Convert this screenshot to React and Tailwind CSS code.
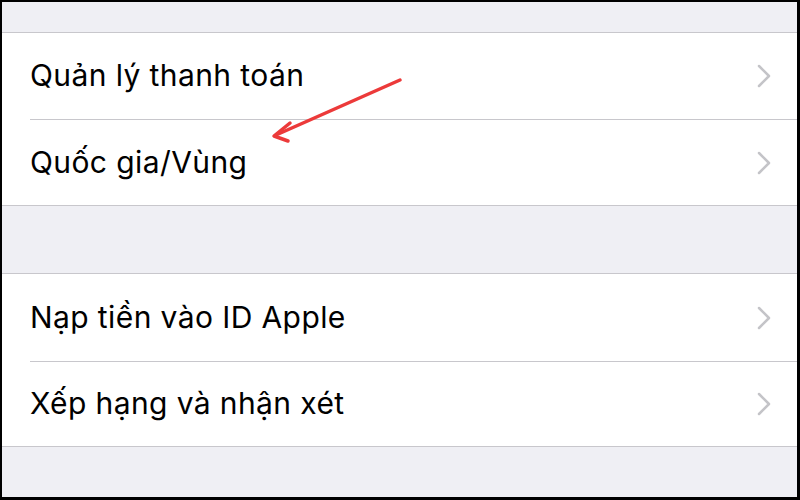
const rowsA = ['Quản lý thanh toán', 'Quốc gia/Vùng']
const rowsB = ['Nạp tiền vào ID Apple', 'Xếp hạng và nhận xét']

function Chevron() {
  return (
    <svg width="14" height="24" viewBox="0 0 14 24" fill="none">
      <polyline points="2,2 12,12 2,22" stroke="#c4c4c8" strokeWidth="2.5" strokeLinecap="round" strokeLinejoin="round" />
    </svg>
  )
}

function Row({ label, last, h }) {
  return (
    <div className={`flex bg-white ${h}`}>
      <div className={`flex flex-1 items-center justify-between ml-[28px] pr-[26px] ${last ? '' : 'border-b border-[#c8c7cc]'}`}>
        <span className="text-[30px] text-black tracking-[0.4px] leading-none pb-[2px]">{label}</span>
        <Chevron />
      </div>
    </div>
  )
}

export default function App() {
  return (
    <div
      className="relative w-[800px] h-[500px] overflow-hidden bg-[#efeff4] border-t-2 border-l-2 border-r-[3px] border-b-[3px] border-black"
      style={{ fontFamily: 'Inter, "Noto Sans", sans-serif' }}
    >
      <div className="h-[30px]" />
      <div className="border-y border-[#c8c7cc]">
        <Row label={rowsA[0]} h="h-[87px]" />
        <Row label={rowsA[1]} h="h-[85px]" last />
      </div>
      <div className="h-[67px]" />
      <div className="border-y border-[#c8c7cc]">
        <Row label={rowsB[0]} h="h-[88px]" />
        <Row label={rowsB[1]} h="h-[84px]" last />
      </div>

      <svg className="absolute left-0 top-0" width="800" height="500" viewBox="0 0 800 500">
        <g stroke="#ec3a3a" strokeWidth="3.5" strokeLinecap="round" strokeLinejoin="round" fill="none">
          <line x1="398" y1="78" x2="274" y2="133" />
          <polyline points="288,121 272,134 286,139" />
        </g>
      </svg>
    </div>
  )
}
